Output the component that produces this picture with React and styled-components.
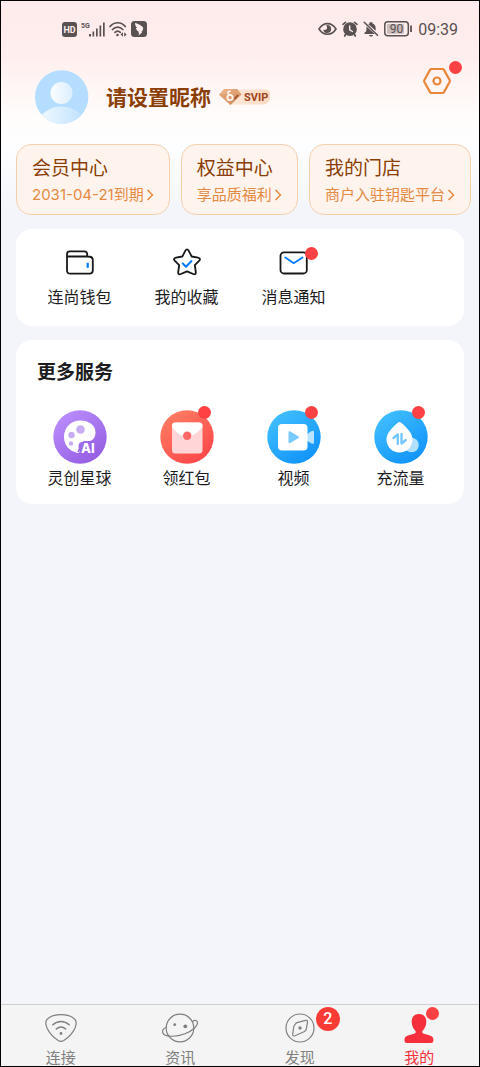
import React from "react";
import styled, { createGlobalStyle } from "styled-components";

const GlobalStyle = createGlobalStyle`
  * { box-sizing: border-box; }
  body {
    margin: 0;
    font-family: Inter, "Noto Sans CJK SC", sans-serif;
    color: #1d1d1f;
  }
  button { font: inherit; color: inherit; background: none; border: 0; padding: 0; cursor: pointer; }
  a { color: inherit; text-decoration: none; }
  h1, h2, p { margin: 0; }
  svg { display: block; flex: none; }
`;

const Page = styled.div`
  min-height: 100vh;
  display: flex;
  flex-direction: column;
  border: 1px solid #000;
  background: linear-gradient(#feebeb 0, #feeeed 50px, #fffdfc 120px, #fdfeff 145px, #f4f5fa 210px);
`;

const StatusBar = styled.div`
  display: flex;
  align-items: center;
  justify-content: space-between;
  height: 20px;
  margin-top: 18px;
  padding: 0 21px 0 61px;
  color: #5a5152;
`;

const StatusGroup = styled.div`
  display: flex;
  align-items: center;
  gap: ${(p) => p.$gap}px;
`;

const Clock = styled.time`
  padding-top: 2px;
  font: 400 16px/20px Roboto, sans-serif;
`;

const Profile = styled.header`
  display: flex;
  align-items: flex-start;
  justify-content: space-between;
  padding: 27px 27px 20px 34px;
`;

const Identity = styled.div`
  display: flex;
  align-items: center;
  margin-top: 4px;
`;

const Nickname = styled.h1`
  margin: 0 8px 0 17px;
  padding-top: 2px;
  font-size: 21px;
  line-height: 30px;
  font-weight: 700;
  color: #8b3e04;
`;

const SettingsButton = styled.button`
  position: relative;
`;

const Dot = styled.span`
  position: absolute;
  top: ${(p) => p.$top}px;
  right: ${(p) => p.$right}px;
  width: 13px;
  height: 13px;
  border-radius: 50%;
  background: #fe4142;
`;

const CountBadge = styled.span`
  position: absolute;
  top: -3px;
  right: -22px;
  width: 24px;
  height: 24px;
  border-radius: 50%;
  background: #fa3c36;
  color: #fff;
  font: 500 16px/24px Roboto, sans-serif;
  text-align: center;
`;

const Perks = styled.nav`
  display: flex;
  gap: 11px;
  padding: 0 8px 0 15px;
`;

const PerkCard = styled.a`
  flex: 1 1 auto;
  padding: 10px 14px 7px 15px;
  border: 1px solid #f4d0ae;
  border-radius: 15px;
  background: #fff3ee;
  white-space: nowrap;
`;

const PerkTitle = styled.h2`
  font-size: 19px;
  line-height: 28px;
  font-weight: 400;
  color: #8b3e04;
`;

const PerkNote = styled.p`
  display: flex;
  align-items: center;
  gap: 2px;
  font-size: 15px;
  line-height: 24px;
  color: #e58a43;
`;

const Main = styled.main`
  flex: 1;
  display: flex;
  flex-direction: column;
  gap: 14px;
  padding: 14px 15px;
`;

const Panel = styled.section`
  padding: ${(p) => (p.$titled ? "20px 10px 15px" : "18px 10px 18px")};
  border-radius: 16px;
  background: #fff;
`;

const PanelTitle = styled.h2`
  margin: 0 0 24px 11px;
  font-size: 19px;
  line-height: 26px;
  font-weight: 700;
`;

const Grid = styled.div`
  display: grid;
  grid-template-columns: repeat(4, 1fr);
`;

const Tile = styled.button`
  display: flex;
  flex-direction: column;
  align-items: center;
  gap: ${(p) => p.$gap}px;
  font-size: 16px;
  line-height: 22px;
`;

const IconBox = styled.span`
  position: relative;
`;

const TabBar = styled.nav`
  display: grid;
  grid-template-columns: repeat(4, 1fr);
  border-top: 1px solid #cfd0d1;
  background: #f4f4f4;
`;

const Tab = styled.a`
  display: flex;
  flex-direction: column;
  align-items: center;
  gap: 4px;
  padding-top: 5px;
  font-size: 15px;
  line-height: 16px;
  color: ${(p) => (p.$active ? "#f5303c" : "#808080")};
`;

const HdIcon = () => (
  <svg width="15" height="15" viewBox="0 0 15 15">
    <rect width="15" height="15" rx="3" fill="currentColor" />
    <text x="7.5" y="11" textAnchor="middle" fontSize="9" fontWeight="700" fontFamily="Roboto, sans-serif" fill="#feeeed">HD</text>
  </svg>
);

const SignalIcon = () => (
  <svg width="24" height="18" viewBox="0 0 24 18" fill="currentColor">
    <text x="0" y="8" fontSize="7" fontWeight="700" fontFamily="Roboto, sans-serif">5G</text>
    <path d="M8 14h2v2.500H8zM11.500 11.500h1.700v5h-1.700zM15 8.500h1.700v8H15zM18.500 5.500h1.700v11h-1.700zM22 2.500h1.700v14H22z" />
  </svg>
);

const StatusWifiIcon = () => (
  <svg width="18" height="16" viewBox="0 0 18 16" fill="none" stroke="currentColor" strokeWidth="1.700" strokeLinecap="round">
    <path d="M1 5.500C5.500.500 12 .500 16.300 5.500M3.500 8.500c3-3.300 7.300-3.300 10.300 0M6 11.300c1.700-1.700 3.700-1.700 5.300 0" />
    <circle cx="8.500" cy="14" r="1.300" fill="currentColor" stroke="none" />
    <path d="M14 11.200l-2.400 2.300 2.400 2.200zM15.200 11.200l2.400 2.300-2.400 2.200z" fill="currentColor" stroke="none" />
  </svg>
);

const BirdIcon = () => (
  <svg width="16" height="16" viewBox="0 0 16 16">
    <rect width="16" height="16" rx="3.500" fill="currentColor" />
    <path d="M4 2c3 .8 7 2.600 8 4.600.7 1.500-.6 2.600-.6 3.600l-1 .2.600 1.200-3.500 3 .7-3.200-1.500-.2 1-.8C5.500 9.500 5 7.800 5 6.900l1.200.2C4.800 5.800 4 3.800 4 2z" fill="#feeeed" />
  </svg>
);

const EyeIcon = () => (
  <svg width="19" height="14" viewBox="0 0 19 14" fill="none" stroke="currentColor" strokeWidth="1.600">
    <path d="M1 7c4.500-7.200 12.500-7.200 17 0-4.500 7-12.500 7-17 0z" />
    <path d="M9.200 3a4 4 0 1 1-4 4.500c1 .8 3.500.7 3.800-1.500.2-1.300-.4-2-.8-2.700z" fill="currentColor" stroke="none" />
  </svg>
);

const AlarmIcon = () => (
  <svg width="16" height="16" viewBox="0 0 16 16" fill="none" stroke="currentColor" strokeWidth="1.700" strokeLinecap="round">
    <circle cx="8" cy="8.200" r="6" fill="currentColor" />
    <path d="M1 3.300L3.500 1.300M15 3.300l-2.500-2M3.500 13.500L2.700 15M12.500 13.500l.8 1.500" />
    <path d="M7.700 5v3.800l2.700 1.700" stroke="#feeeed" strokeWidth="1.400" />
  </svg>
);

const MutedBellIcon = () => (
  <svg width="16" height="16" viewBox="0 0 16 16" fill="currentColor">
    <path d="M6.500 2.600V1.200h3v1.300c2.400.8 3.200 2.700 3.200 5v2.200L5.300 3.300zM3.500 5.500L11.800 13H1.500v-1.200l1.800-1.600zM6 14h4c-.4 2-3.600 2-4 0z" />
    <path d="M1.200 1.300l13.300 13" stroke="currentColor" strokeWidth="1.500" strokeLinecap="round" />
  </svg>
);

const BatteryIcon = () => (
  <svg width="29" height="16" viewBox="0 0 29 16">
    <rect x=".8" y=".8" width="23.500" height="14" rx="3" fill="none" stroke="currentColor" strokeWidth="1.500" />
    <rect x="3" y="3" width="17" height="9.800" rx="1" fill="#c9bcbc" />
    <path d="M27 4.500v6.500" stroke="currentColor" strokeWidth="1.800" />
    <text x="12.500" y="12" textAnchor="middle" fontSize="12" fontFamily="Roboto, sans-serif" fill="currentColor">90</text>
  </svg>
);

const Avatar = () => (
  <svg width="54" height="54" viewBox="0 0 54 54">
    <defs>
      <linearGradient id="person" x1="0" x2="1"><stop stopColor="#fbfdff" /><stop offset="1" stopColor="#dceefe" /></linearGradient>
      <linearGradient id="shoulders" x1="0" x2="1"><stop stopColor="#f6fbff" /><stop offset="1" stopColor="#badffd" /></linearGradient>
      <clipPath id="face"><circle cx="26.700" cy="27" r="26.700" /></clipPath>
    </defs>
    <circle cx="26.700" cy="27" r="26.700" fill="#b4ddff" />
    <circle cx="26.500" cy="23" r="11" fill="url(#person)" />
    <circle cx="26.500" cy="64" r="27.500" fill="url(#shoulders)" clipPath="url(#face)" />
  </svg>
);

const SvipBadge = () => (
  <svg width="52" height="18" viewBox="0 0 52 18">
    <defs>
      <linearGradient id="pill" x1="0" x2="1"><stop stopColor="#ffe9dc" /><stop offset="1" stopColor="#fbd9c0" /></linearGradient>
      <linearGradient id="gem" x1="0" x2="1" y2="1"><stop stopColor="#efbd93" /><stop offset="1" stopColor="#c77d4b" /></linearGradient>
    </defs>
    <path d="M13 1.500h34a4 4 0 0 1 4 4v4a7 7 0 0 1-7 7H10z" fill="url(#pill)" />
    <path d="M5 1h13l4.500 5.500L11.500 17 0 6.500z" fill="url(#gem)" />
    <path d="M0 6.500h7l4.500 10.500zM18 1l4.500 5.500-6-1z" fill="#e0a071" />
    <circle cx="11" cy="9.500" r="2.600" fill="none" stroke="#fff7f0" strokeWidth="1.800" />
    <path d="M9.800 7L8.700 3.800M8.500 4l3-1" stroke="#fff7f0" strokeWidth="1.500" />
    <path d="M15.500 11l3.500-4" stroke="#9b4a2c" strokeWidth="1.300" />
    <text x="25" y="13" fontSize="11" fontWeight="700" fontFamily="Roboto, sans-serif" fill="#a2441c">SVIP</text>
  </svg>
);

const SettingsIcon = () => (
  <svg width="30" height="30" viewBox="0 0 30 30" fill="none" stroke="#e98638" strokeWidth="2.200" strokeLinejoin="round">
    <path d="M9.500 3h11q1 0 1.500.9l5.600 10.100q.5 1 0 2L22 26.100q-.5.900-1.500.9h-11q-1 0-1.500-.9L2.400 16q-.5-1 0-2L8 3.900Q8.500 3 9.500 3z" />
    <circle cx="15" cy="15" r="3.500" />
  </svg>
);

const Chevron = () => (
  <svg width="8" height="12" viewBox="0 0 8 12" fill="none" stroke="currentColor" strokeWidth="1.500">
    <path d="M1.500 1l5 5-5 5" />
  </svg>
);

const WalletIcon = () => (
  <svg width="34" height="34" viewBox="0 0 34 34" fill="none" stroke="#17181a" strokeWidth="1.800" strokeLinecap="round">
    <path d="M4 9.500h21q4.800 0 4.800 3.500v10.500q0 3.200-3.300 3.200H7.500Q4 26.700 4 23.500V7.500Q4 4.300 6.500 4.300h15q2.200 0 2.700 2.200v2.800" />
    <path d="M24.700 15.800v5" stroke="#007aff" strokeWidth="2.200" strokeLinecap="butt" />
  </svg>
);

const StarIcon = () => (
  <svg width="34" height="34" viewBox="0 0 34 34" fill="none" stroke="#17181a" strokeWidth="1.800" strokeLinejoin="round" strokeLinecap="round">
    <path d="M15.300 3.800q1.700-2.700 3.400 0l3 5.700 6.300 1.100q3 .7 1.300 3L24.800 18.200l1 6.800q.2 3.200-2.600 2L17 24.300 10.800 27q-2.800 1.200-2.600-2l1-6.800L4.700 13.600q-1.700-2.300 1.300-3l6.300-1.100z" />
    <path d="M12.800 16.500l3.200 3.200 5.500-5.700" stroke="#007aff" strokeWidth="2" />
  </svg>
);

const MailIcon = () => (
  <svg width="34" height="34" viewBox="0 0 34 34" fill="none" stroke="#17181a" strokeWidth="1.800" strokeLinecap="round">
    <rect x="3.500" y="5.300" width="26.300" height="21.200" rx="3.500" />
    <path d="M8.300 10.500l8.400 5.700 8.800-5.700" stroke="#007aff" strokeWidth="1.900" />
  </svg>
);

const ServiceCircle = ({ id, from, to, children }) => (
  <svg width="54" height="54" viewBox="0 0 54 54">
    <defs>
      <linearGradient id={id} x1=".1" y1="0" x2=".8" y2="1"><stop stopColor={from} /><stop offset="1" stopColor={to} /></linearGradient>
    </defs>
    <circle cx="27" cy="27" r="26.700" fill={`url(#${id})`} />
    {children}
  </svg>
);

const PaletteIcon = () => (
  <ServiceCircle id="violet" from="#bd91ff" to="#935be1">
    <path d="M27 10.500c9 0 15.500 4.800 15.500 12 0 5.500-3.500 9-8 9-5-.2-9 .2-9 4.500 0 2.500 1 3.500 1 5.500 0 1.200-1 1.700-2.500 1.200C16 41 11 35 11 27c0-9.500 7-16.500 16-16.500z" fill="#fff" />
    <path d="M30 32h11M28 35l-3 7" stroke="#9c65ea" strokeWidth="1.500" />
    <circle cx="27.500" cy="19.500" r="4.300" fill="#c8adf5" />
    <circle cx="18.500" cy="25" r="3.200" fill="#c8adf5" />
    <circle cx="18" cy="33.500" r="2.200" fill="#c8adf5" />
    <text x="28" y="43" fontSize="13" fontWeight="800" fontFamily="Inter, sans-serif" fill="#fff" stroke="#9c65ea" strokeWidth="2" paintOrder="stroke">AI</text>
  </ServiceCircle>
);

const RedPacketIcon = () => (
  <ServiceCircle id="coral" from="#ff8065" to="#fc4549">
    <rect x="12" y="12.500" width="30.500" height="31" rx="3.500" fill="#ffd5d7" />
    <path d="M12 17v-1q0-3.500 3.500-3.500H39q3.500 0 3.500 3.500v1q-6 7-12 9h-7q-7-2-11.500-9z" fill="#fff" />
    <circle cx="27.200" cy="25.700" r="4.200" fill="#ff6865" />
  </ServiceCircle>
);

const VideoIcon = () => (
  <ServiceCircle id="sky" from="#44c2ff" to="#0f91fb">
    <path d="M39 25l5.500-4q2.500-1 2.500 1v10.500q0 2-2.500 1L39 30z" fill="#b9e3ff" />
    <rect x="11" y="14" width="29.500" height="26.500" rx="4" fill="#fff" />
    <path d="M21.500 22.500q0-2 1.800-1l8.200 5q1.200.8 0 1.600l-8.200 4.800q-1.800 1-1.800-1z" fill="#78c9ff" />
  </ServiceCircle>
);

const DataIcon = () => (
  <ServiceCircle id="azure" from="#44c2ff" to="#0f91fb">
    <circle cx="37.500" cy="35" r="7.300" fill="#b2e1ff" />
    <path d="M23.500 13q2-1.800 4 0C32 17 38.500 22.500 38.500 29.500a13 13 0 0 1-26 0C12.500 22.500 19 17 23.500 13z" fill="#fff" />
    <path d="M19.500 28l4.300-3.600v9.600M27.500 24v9.600l4.300-3.600" stroke="#6fc5fd" strokeWidth="2.300" strokeLinecap="round" strokeLinejoin="round" fill="none" />
  </ServiceCircle>
);

const TabIcon = (props) => (
  <svg width="36" height="36" viewBox="0 0 36 36" fill="none" stroke="currentColor" strokeWidth="1.200" strokeLinecap="round" {...props} />
);

const ConnectIcon = () => (
  <TabIcon>
    <path d="M18 4.700c6 0 11.500 1.800 14.200 5 1.500 2.200 1.200 5-.2 8.300-2.500 5.500-8 10.500-11.200 12.600q-2.800 1.700-5.600 0C12 28.500 6.500 23.500 4 18c-1.400-3.300-1.700-6.100-.2-8.300 2.700-3.200 8.200-5 14.200-5z" />
    <path d="M9.800 14.800c4.800-4.500 11.600-4.500 16.400 0M13.300 19c2.900-2.500 6.500-2.500 9.400 0" strokeWidth="1.500" />
    <circle cx="18" cy="23.500" r="1.400" fill="currentColor" stroke="none" />
  </TabIcon>
);

const PlanetIcon = () => (
  <TabIcon>
    <circle cx="18" cy="18" r="13.800" />
    <path d="M30.500 12c.8-2 4-2.200 4.900-.2 1 3.700-4.500 9-12.400 11.900-8.500 3.200-18.500 3.500-21.500.3-2-2.500-.5-6 2.500-6.500" />
    <circle cx="12.700" cy="14.700" r="1.400" fill="currentColor" stroke="none" />
    <circle cx="23.300" cy="16.300" r="1.900" fill="currentColor" stroke="none" />
  </TabIcon>
);

const CompassIcon = () => (
  <TabIcon>
    <circle cx="18" cy="18" r="14" />
    <path d="M13.500 13.800q.5-.8 1.500-1.200l8.500-2.300q2.200-.4 2 1.800l-1.200 6.700q-.3 1.700-1.800 2.700L13 25.700q-2.500 1-2.300-1.500l1-7q.2-1.700 1.800-3.400z" />
    <circle cx="18" cy="18" r="1.700" fill="currentColor" stroke="none" />
  </TabIcon>
);

const PersonIcon = () => (
  <TabIcon fill="currentColor" stroke="none">
    <path d="M18 4c4.700 0 7.500 3.300 7.300 8-.1 3.800-1.800 7-3.800 9-.8 1.200 0 2.300 1.500 2.800l6 1.700q3.400 1 3.400 4v1.200q0 2.300-2.500 2.300H6q-2.500 0-2.500-2.300v-1.200q0-3 3.400-4l6-1.700c1.600-.5 2.400-1.600 1.600-2.800-2-2-3.700-5.200-3.800-9C10.500 7.300 13.300 4 18 4z" />
  </TabIcon>
);

const perks = [
  { title: "会员中心", note: "2031-04-21到期" },
  { title: "权益中心", note: "享品质福利" },
  { title: "我的门店", note: "商户入驻钥匙平台" },
];

const shortcuts = [
  { label: "连尚钱包", Icon: WalletIcon },
  { label: "我的收藏", Icon: StarIcon },
  { label: "消息通知", Icon: MailIcon, unread: true },
];

const services = [
  { label: "灵创星球", Icon: PaletteIcon },
  { label: "领红包", Icon: RedPacketIcon, unread: true },
  { label: "视频", Icon: VideoIcon, unread: true },
  { label: "充流量", Icon: DataIcon, unread: true },
];

const tabs = [
  { label: "连接", Icon: ConnectIcon },
  { label: "资讯", Icon: PlanetIcon },
  { label: "发现", Icon: CompassIcon, count: 2 },
  { label: "我的", Icon: PersonIcon, unread: true, active: true },
];

export default function App() {
  return (
    <Page>
      <GlobalStyle />
      <StatusBar>
        <StatusGroup $gap={4}>
          <HdIcon />
          <SignalIcon />
          <StatusWifiIcon />
          <BirdIcon />
        </StatusGroup>
        <StatusGroup $gap={5}>
          <EyeIcon />
          <AlarmIcon />
          <MutedBellIcon />
          <BatteryIcon />
          <Clock>09:39</Clock>
        </StatusGroup>
      </StatusBar>
      <Profile>
        <Identity>
          <Avatar />
          <Nickname>请设置昵称</Nickname>
          <SvipBadge />
        </Identity>
        <SettingsButton type="button" aria-label="设置">
          <SettingsIcon />
          <Dot $top={-5} $right={-10} />
        </SettingsButton>
      </Profile>
      <Perks>
        {perks.map(({ title, note }) => (
          <PerkCard key={title} href="#">
            <PerkTitle>{title}</PerkTitle>
            <PerkNote>{note}<Chevron /></PerkNote>
          </PerkCard>
        ))}
      </Perks>
      <Main>
        <Panel>
          <Grid>
            {shortcuts.map(({ label, Icon, unread }) => (
              <Tile key={label} type="button" $gap={5}>
                <IconBox><Icon />{unread && <Dot $top={0} $right={-7} />}</IconBox>
                {label}
              </Tile>
            ))}
          </Grid>
        </Panel>
        <Panel $titled>
          <PanelTitle>更多服务</PanelTitle>
          <Grid>
            {services.map(({ label, Icon, unread }) => (
              <Tile key={label} type="button" $gap={3}>
                <IconBox><Icon />{unread && <Dot $top={-4} $right={3} />}</IconBox>
                {label}
              </Tile>
            ))}
          </Grid>
        </Panel>
      </Main>
      <TabBar>
        {tabs.map(({ label, Icon, count, unread, active }) => (
          <Tab key={label} href="#" $active={active}>
            <IconBox>
              <Icon />
              {count && <CountBadge>{count}</CountBadge>}
              {unread && <Dot $top={-3} $right={-2} />}
            </IconBox>
            {label}
          </Tab>
        ))}
      </TabBar>
    </Page>
  );
}
